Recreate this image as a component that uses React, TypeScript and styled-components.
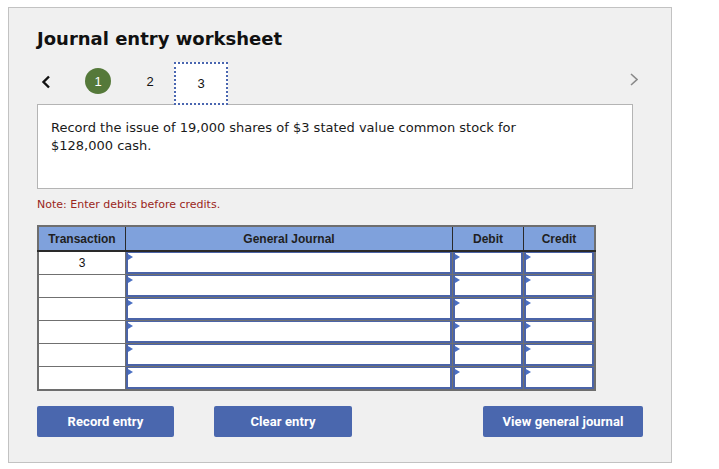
import React, { FunctionComponent } from 'react';
import styled, { createGlobalStyle } from 'styled-components';

const GlobalStyle = createGlobalStyle`
  body {
    margin: 7px 8px;
    background: #fff;
    font-family: "DejaVu Sans", Verdana, sans-serif;
  }
`

const Panel = styled.div`
  width: 634px;
  height: 434px;
  padding: 20px 0 0 28px;
  background: #f0f0f0;
  border: 1px solid #c2c2c2;
`

const Title = styled.h1`
  margin: 0;
  font-size: 18px;
  line-height: 22px;
  font-weight: bold;
  color: #111;
`

const NavRow = styled.div`
  display: flex;
  align-items: flex-start;
  width: 605px;
  height: 42px;
  margin-top: 12px;
`

const ArrowBox = styled.div<{ $right?: boolean }>`
  width: ${p => (p.$right ? '8px' : '35px')};
  margin-left: ${p => (p.$right ? 'auto' : '0')};
  margin-right: ${p => (p.$right ? '4px' : '0')};
  padding: ${p => (p.$right ? '11px 0 0 0' : '13px 0 0 4px')};
  box-sizing: border-box;
  display: flex;
`

const StepSlot = styled.div`
  width: 52px;
  height: 26px;
  margin-top: 6px;
  display: flex;
  align-items: center;
  justify-content: center;
  font-family: "Liberation Sans", Arial, sans-serif;
  font-size: 13px;
  color: #111;
`

const DoneCircle = styled.div`
  width: 26px;
  height: 26px;
  border-radius: 50%;
  background: #55793a;
  color: #fff;
  display: flex;
  align-items: center;
  justify-content: center;
  font-size: 13px;
`

const ActiveTab = styled.div`
  width: 54px;
  height: 43px;
  margin-left: -2px;
  box-sizing: border-box;
  background: #fff;
  border: 2px dotted #4a66b0;
  display: flex;
  align-items: center;
  justify-content: center;
  font-family: "Liberation Sans", Arial, sans-serif;
  font-size: 13px;
  color: #111;
  position: relative;
  z-index: 1;
`

const Prompt = styled.div`
  width: 596px;
  height: 85px;
  box-sizing: border-box;
  background: #fff;
  border: 1px solid #b4b4b4;
  padding: 14px 100px 14px 13px;
  font-size: 13px;
  line-height: 18px;
  color: #1a1a1a;
`

const Note = styled.div`
  margin-top: 9px;
  font-size: 11px;
  line-height: 14px;
  color: #9a2620;
`

const Table = styled.table`
  margin-top: 13px;
  border-collapse: collapse;
  border: 2px solid #6e6e6e;
  font-family: "Liberation Sans", Arial, sans-serif;
`

const HeadCell = styled.th<{ $w: number }>`
  width: ${p => p.$w}px;
  height: 23px;
  padding: 0;
  background: #7fa1dc;
  border: 1px solid #2a2a2a;
  border-bottom: 2px solid #2a2a2a;
  font-size: 12px;
  font-weight: bold;
  color: #1f1f1f;
  text-align: center;
`

const TxCell = styled.td`
  height: 22px;
  padding: 0;
  border: 1px solid #707070;
  background: #fff;
  text-align: center;
  font-size: 12px;
  color: #111;
`

const InputCell = styled.td`
  height: 22px;
  padding: 0;
  border: 1px solid #707070;
  background: #fff;
`

const Field = styled.div`
  position: relative;
  height: 22px;
  box-sizing: border-box;
  border: 2px solid #4b64a8;
  border-top-width: 1px;
  background: #fff;

  &::before {
    content: '';
    position: absolute;
    left: 0;
    top: 1px;
    border-top: 3px solid transparent;
    border-bottom: 3px solid transparent;
    border-left: 5px solid #4a6fc2;
  }
`

const ButtonRow = styled.div`
  display: flex;
  width: 606px;
  margin-top: 15px;
`

const Button = styled.button<{ $w: number; $gap?: number }>`
  width: ${p => p.$w}px;
  height: 31px;
  margin-left: ${p => (p.$gap ? `${p.$gap}px` : '0')};
  background: #4a67ae;
  color: #fff;
  border: none;
  border-radius: 2px;
  font-family: Roboto, "Liberation Sans", sans-serif;
  font-size: 13px;
  font-weight: bold;
  letter-spacing: 0.1px;
  &:last-child {
    margin-left: auto;
  }
`

const LeftChevron = () => (
  <svg width="10" height="14" viewBox="0 0 10 14">
    <path d="M8 1.5 L2.5 7 L8 12.5" fill="none" stroke="#111" strokeWidth="2.4" />
  </svg>
)

const RightChevron = () => (
  <svg width="8" height="13" viewBox="0 0 8 13">
    <path d="M1 1 L7 6.5 L1 12" fill="none" stroke="#8a8a8a" strokeWidth="1.6" />
  </svg>
)

const rows = ['3', '', '', '', '', '']

const App: FunctionComponent = () => {
  return (
    <Panel>
      <GlobalStyle />
      <Title>Journal entry worksheet</Title>
      <NavRow>
        <ArrowBox><LeftChevron /></ArrowBox>
        <StepSlot><DoneCircle>1</DoneCircle></StepSlot>
        <StepSlot>2</StepSlot>
        <ActiveTab>3</ActiveTab>
        <ArrowBox $right><RightChevron /></ArrowBox>
      </NavRow>
      <Prompt>
        Record the issue of 19,000 shares of $3 stated value common stock for $128,000 cash.
      </Prompt>
      <Note>Note: Enter debits before credits.</Note>
      <Table>
        <thead>
          <tr>
            <HeadCell $w={86}>Transaction</HeadCell>
            <HeadCell $w={326}>General Journal</HeadCell>
            <HeadCell $w={70}>Debit</HeadCell>
            <HeadCell $w={70}>Credit</HeadCell>
          </tr>
        </thead>
        <tbody>
          {rows.map((tx, i) => (
            <tr key={i}>
              <TxCell>{tx}</TxCell>
              <InputCell><Field /></InputCell>
              <InputCell><Field /></InputCell>
              <InputCell><Field /></InputCell>
            </tr>
          ))}
        </tbody>
      </Table>
      <ButtonRow>
        <Button $w={137}>Record entry</Button>
        <Button $w={138} $gap={40}>Clear entry</Button>
        <Button $w={160}>View general journal</Button>
      </ButtonRow>
    </Panel>
  )
}

export default App;
